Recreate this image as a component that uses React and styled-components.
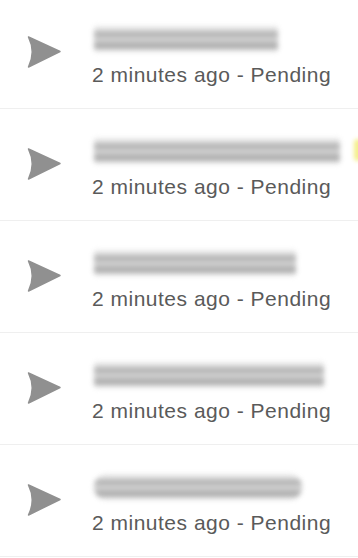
import React from "react";
import styled, { createGlobalStyle } from "styled-components";

const Global = createGlobalStyle`
  html, body { margin: 0; padding: 0; background: #ffffff; }
  body { font-family: "Liberation Sans", Arial, sans-serif; overflow: hidden; }
`;

const List = styled.div`
  display: flex;
  flex-direction: column;
  margin-top: -3px;
`;

const Row = styled.div`
  position: relative;
  height: 111px;
  border-bottom: 1px solid #efefef;
  display: grid;
  grid-template-columns: 92px 1fr;
  align-items: start;
`;

const IconCell = styled.div`
  padding-top: 39px;
  padding-left: 27px;
`;

const Body = styled.div`
  display: flex;
  flex-direction: column;
  padding-top: 29px;
`;

const Blur = styled.div`
  width: ${(p) => p.$w}px;
  height: 26px;
  margin-left: 2px;
  border-radius: ${(p) => (p.$round ? "13px" : "3px")};
  background: linear-gradient(
    180deg,
    #eeeeee 0%,
    #d0d0d0 20%,
    #9a9a9a 32%,
    #d2d2d2 46%,
    #c0c0c0 62%,
    #999999 78%,
    #d8d8d8 92%,
    #f2f2f2 100%
  );
  filter: blur(2.5px);
  opacity: 0.9;
`;

const Meta = styled.div`
  margin-top: 12px;
  font-size: 21px;
  letter-spacing: 0.5px;
  line-height: 22px;
  color: #5a5a5a;
  white-space: nowrap;
`;

const Smudge = styled.div`
  position: absolute;
  right: -4px;
  top: 30px;
  width: 8px;
  height: 22px;
  border-radius: 4px;
  background: #f4ef8a;
  filter: blur(2px);
`;

const Arrow = () => (
  <svg width="34" height="34" viewBox="0 0 34 34">
    <path
      d="M1.5 1 L33 15.5 L1.5 31 Q9 16 1.5 1 Z"
      fill="#909090"
      stroke="#909090"
      strokeWidth="1.5"
      strokeLinejoin="round"
    />
  </svg>
);

const items = [
  { w: 184 },
  { w: 246, smudge: true },
  { w: 202 },
  { w: 230 },
  { w: 208, round: true },
];

export default function App() {
  return (
    <>
      <Global />
      <List>
        {items.map((it, i) => (
          <Row key={i}>
            <IconCell>
              <Arrow />
            </IconCell>
            <Body>
              <Blur $w={it.w} $round={it.round} />
              <Meta>2 minutes ago - Pending</Meta>
            </Body>
            {it.smudge && <Smudge />}
          </Row>
        ))}
      </List>
    </>
  );
}
